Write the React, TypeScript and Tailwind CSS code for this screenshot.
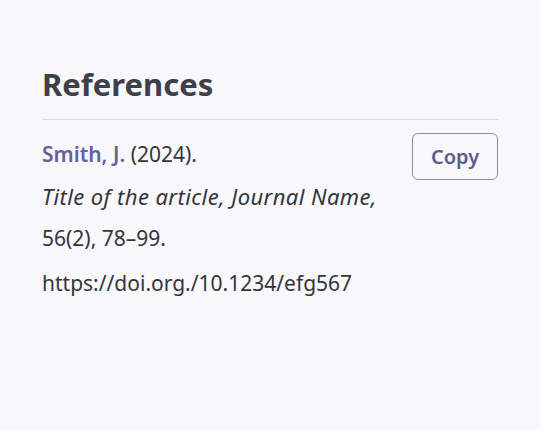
export default function App() {
  return (
    <div
      className="w-[540px] h-[430px] bg-[#f8f7fa] px-[42px] pt-[62px]"
      style={{ fontFamily: '"Noto Sans", "Open Sans", sans-serif' }}
    >
      <h2 className="text-[31px] leading-[44px] font-bold text-[#3e3f47]">References</h2>
      <div className="mt-[13px] border-t border-[#dcdbe2]" />
      <div className="flex justify-between items-start mt-[13px]">
        <div className="text-[21px] leading-[42px] text-[#34353c]">
          <div>
            <span className="font-semibold text-[#6a5f99]">Smith, J.</span> (2024).
          </div>
          <div className="italic text-[22px] tracking-[0.4px]">Title of the article, Journal Name,</div>
          <div>56(2), 78–99.</div>
          <div className="mt-[3px]">https://doi.org./10.1234/efg567</div>
        </div>
        <button className="w-[86px] h-[47px] border border-[#8d86b0] rounded-[6px] text-[20px] font-semibold text-[#62598f] bg-transparent">
          Copy
        </button>
      </div>
    </div>
  )
}
